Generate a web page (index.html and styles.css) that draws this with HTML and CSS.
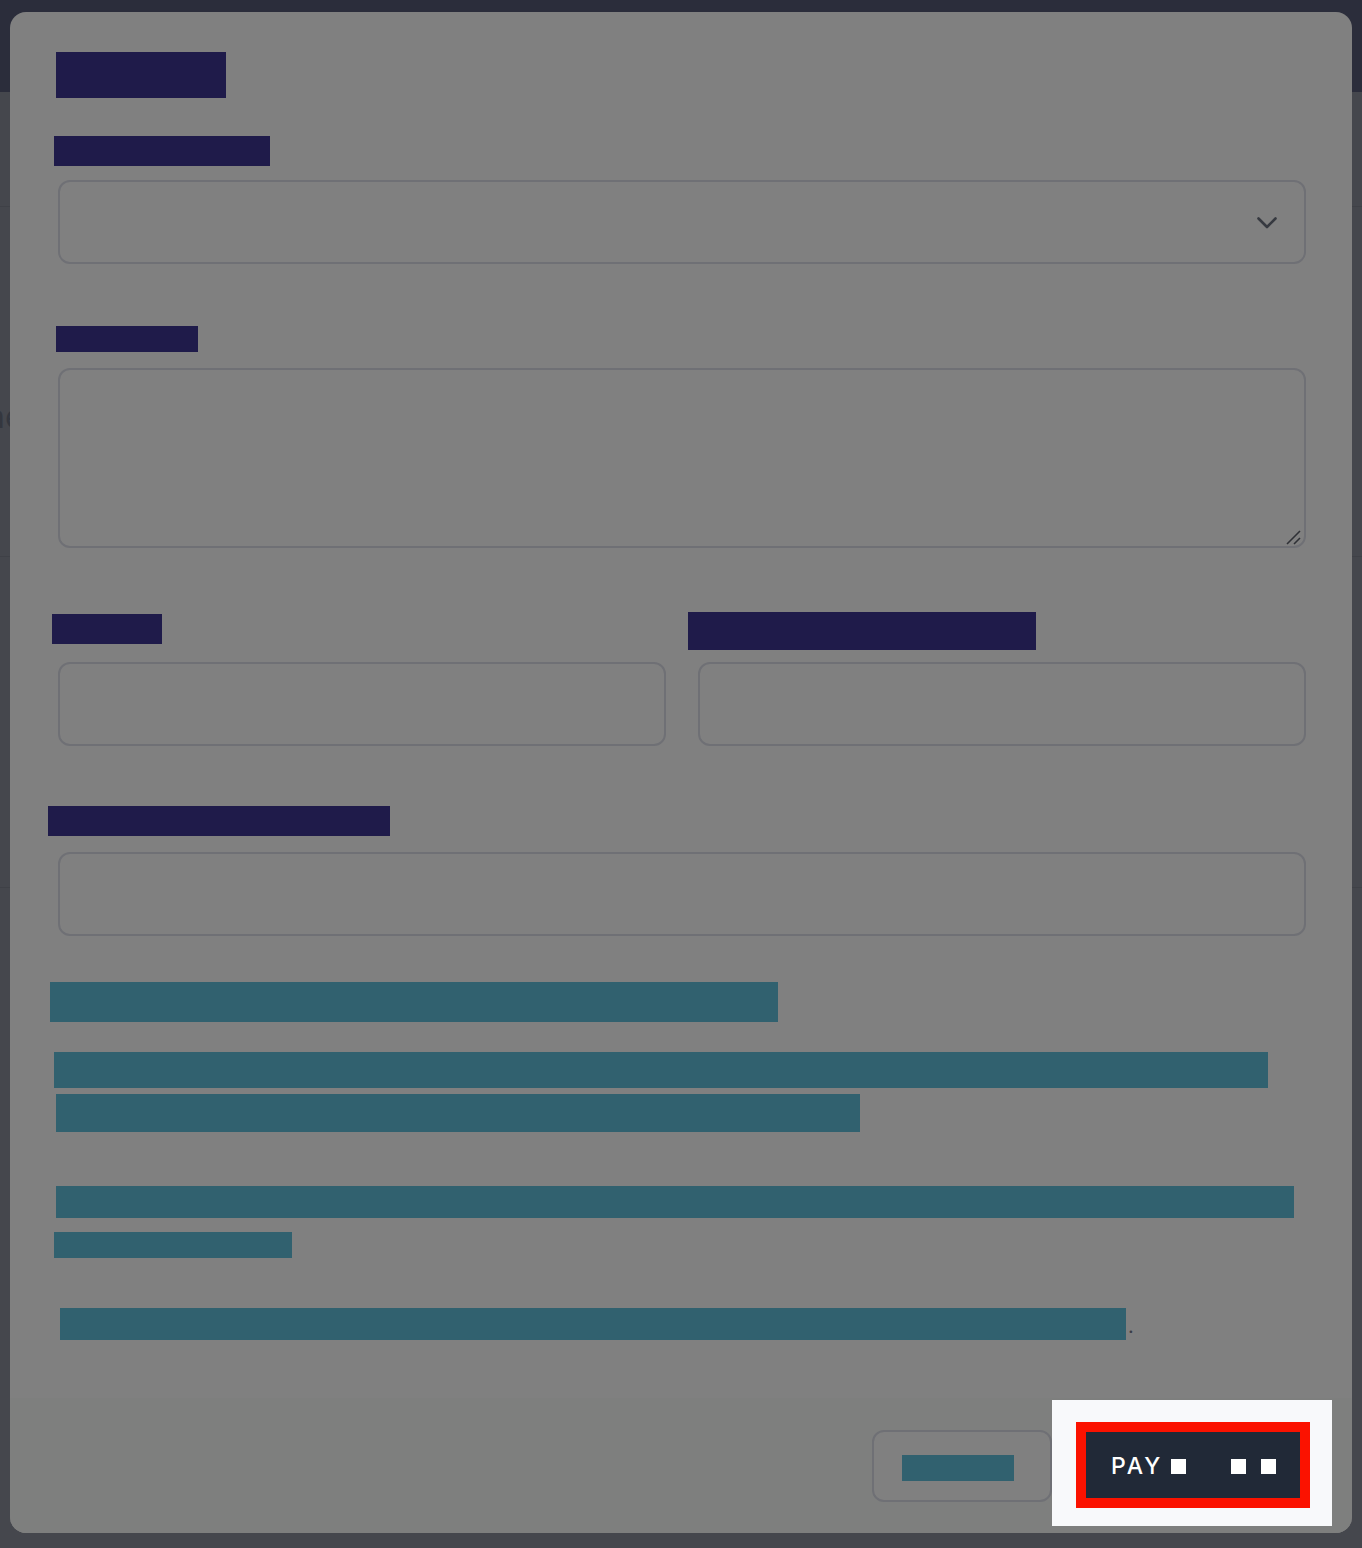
FILE: index.html
```html
<!DOCTYPE html>
<html lang="en">
<head>
<meta charset="utf-8">
<title>Payment</title>
<link rel="stylesheet" href="styles.css">
</head>
<body>
<div class="page">
  <header class="topbar"></header>
  <main class="page-body">
    <div class="row row-a"></div>
    <div class="row row-b"><span class="bg-text">ne</span></div>
    <div class="row row-c"><span class="bg-text">t</span></div>
  </main>
</div>

<div class="modal">
  <div class="modal-body">
    <div class="bar navy title"></div>
    <div class="bar navy lbl1"></div>
    <div class="field select">
      <svg class="chevron" width="20" height="12" viewBox="0 0 20 12"><polyline points="1.5,1.5 10,10 18.5,1.5" fill="none" stroke="#363940" stroke-width="2.6" stroke-linecap="round" stroke-linejoin="round"/></svg>
    </div>
    <div class="bar navy lbl2"></div>
    <div class="field textarea">
      <svg class="grip" width="16" height="16" viewBox="0 0 16 16"><line x1="1" y1="15" x2="14" y2="2" stroke="#2f3136" stroke-width="1.6"/><line x1="8" y1="15" x2="14" y2="9" stroke="#2f3136" stroke-width="1.6"/></svg>
    </div>
    <div class="two-col">
      <div class="col">
        <div class="bar navy lbl3"></div>
        <div class="field input"></div>
      </div>
      <div class="col">
        <div class="bar navy lbl4"></div>
        <div class="field input"></div>
      </div>
    </div>
    <div class="bar navy lbl5"></div>
    <div class="field input full"></div>
    <div class="bar teal t1"></div>
    <div class="bar teal t2"></div>
    <div class="bar teal t3"></div>
    <div class="bar teal t4"></div>
    <div class="bar teal t5"></div>
    <div class="line-end"><span class="bar teal t6"></span><span class="dot">.</span></div>
  </div>
  <footer class="modal-footer">
    <button class="btn-cancel" type="button"><span class="bar teal cancel-text"></span></button>
    <div class="highlight">
      <button class="btn-pay" type="button">PAY<span class="sq sq1"></span><span class="sq sq2"></span><span class="sq sq3"></span></button>
    </div>
  </footer>
</div>
</body>
</html>
```

FILE: styles.css
```css
* { box-sizing: border-box; }
html, body { margin: 0; padding: 0; }
body {
  width: 1362px;
  height: 1548px;
  overflow: hidden;
  background: #45474d;
  font-family: "Inter", "Liberation Sans", sans-serif;
  position: relative;
}

/* underlying dimmed page */
.page { width: 1362px; }
.topbar { height: 92px; background: #2b2d3b; }
.page-body { display: flex; flex-direction: column; }
.row { border-bottom: 1px solid #3f4147; }
.row-a { height: 115px; }
.row-b { height: 350px; padding-top: 190px; }
.row-c { height: 331px; padding-top: 60px; }
.bg-text {
  font-size: 32px;
  color: #34373f;
  margin-left: -14px;
  line-height: 40px;
}

/* modal */
.modal {
  position: absolute;
  left: 10px;
  top: 12px;
  width: 1342px;
  height: 1521px;
  background: #808080;
  border-radius: 16px;
  display: flex;
  flex-direction: column;
}
.modal-body {
  flex: 1;
  padding: 40px 46px 0 48px;
  display: flex;
  flex-direction: column;
  align-items: flex-start;
}
.bar { display: block; }
.navy { background: #1f1b4a; }
.teal { background: #31616f; }

.title { width: 170px; height: 46px; margin-left: -2px; }
.lbl1 { width: 216px; height: 30px; margin-top: 38px; margin-left: -4px; }
.lbl2 { width: 142px; height: 26px; margin-top: 62px; margin-left: -2px; }
.lbl3 { width: 110px; height: 30px; margin-left: -6px; margin-top: 2px; }
.lbl4 { width: 348px; height: 38px; margin-left: -10px; }
.lbl5 { width: 342px; height: 30px; margin-top: 60px; margin-left: -10px; }

.field {
  width: 1248px;
  border: 2px solid #6f7075;
  border-radius: 12px;
  background: #808080;
}
.select {
  height: 84px;
  margin-top: 14px;
  display: flex;
  align-items: center;
  justify-content: flex-end;
  padding-right: 27px;
}
.chevron { display: block; margin-top: 2px; }
.textarea {
  height: 180px;
  margin-top: 16px;
  display: flex;
  align-items: flex-end;
  justify-content: flex-end;
  padding: 0 2px 1px 0;
}
.grip { display: block; }

.two-col {
  display: grid;
  grid-template-columns: 608px 608px;
  column-gap: 32px;
  margin-top: 64px;
  width: 1248px;
}
.col { display: flex; flex-direction: column; align-items: flex-start; }
.col .input { width: 608px; height: 84px; }
.col:first-child .input { margin-top: 18px; }
.col:last-child .input { margin-top: 12px; }
.full { height: 84px; margin-top: 16px; }

.t1 { width: 728px; height: 40px; margin-top: 46px; margin-left: -8px; }
.t2 { width: 1214px; height: 36px; margin-top: 30px; margin-left: -4px; }
.t3 { width: 804px; height: 38px; margin-top: 6px; margin-left: -2px; }
.t4 { width: 1238px; height: 32px; margin-top: 54px; margin-left: -2px; }
.t5 { width: 238px; height: 26px; margin-top: 14px; margin-left: -4px; }
.line-end {
  display: flex;
  align-items: flex-end;
  margin-top: 50px;
  margin-left: 2px;
}
.t6 { width: 1066px; height: 32px; }
.dot {
  font-size: 20px;
  line-height: 20px;
  color: #3a3c44;
  margin-left: 2px;
  margin-bottom: 4px;
}

/* footer */
.modal-footer {
  height: 135px;
  background: #7e7f7e;
  border-radius: 0 0 16px 16px;
  display: flex;
  justify-content: flex-end;
  align-items: flex-start;
  padding-right: 20px;
}
.btn-cancel {
  width: 180px;
  height: 72px;
  margin-top: 32px;
  border: 2px solid #6f7075;
  border-radius: 12px;
  background: #808080;
  display: flex;
  align-items: center;
  justify-content: flex-start;
  padding: 0 0 0 28px;
}
.cancel-text { width: 112px; height: 26px; margin-top: 4px; }

.highlight {
  width: 280px;
  height: 126px;
  margin-top: 2px;
  background: #f8f9fb;
  padding: 22px 22px 18px 24px;
}
.btn-pay {
  width: 234px;
  height: 86px;
  border: 10px solid #fb1200;
  background: #212937;
  color: #ffffff;
  font-family: "Inter", "Liberation Sans", sans-serif;
  font-size: 23px;
  font-weight: 500;
  letter-spacing: 2.8px;
  display: flex;
  align-items: center;
  padding: 2px 0 0 25px;
  margin: 0;
}
.sq {
  display: inline-block;
  width: 15px;
  height: 15px;
  background: #ffffff;
}
.sq1 { margin-left: 8px; }
.sq2 { margin-left: 45px; }
.sq3 { margin-left: 15px; }
```
